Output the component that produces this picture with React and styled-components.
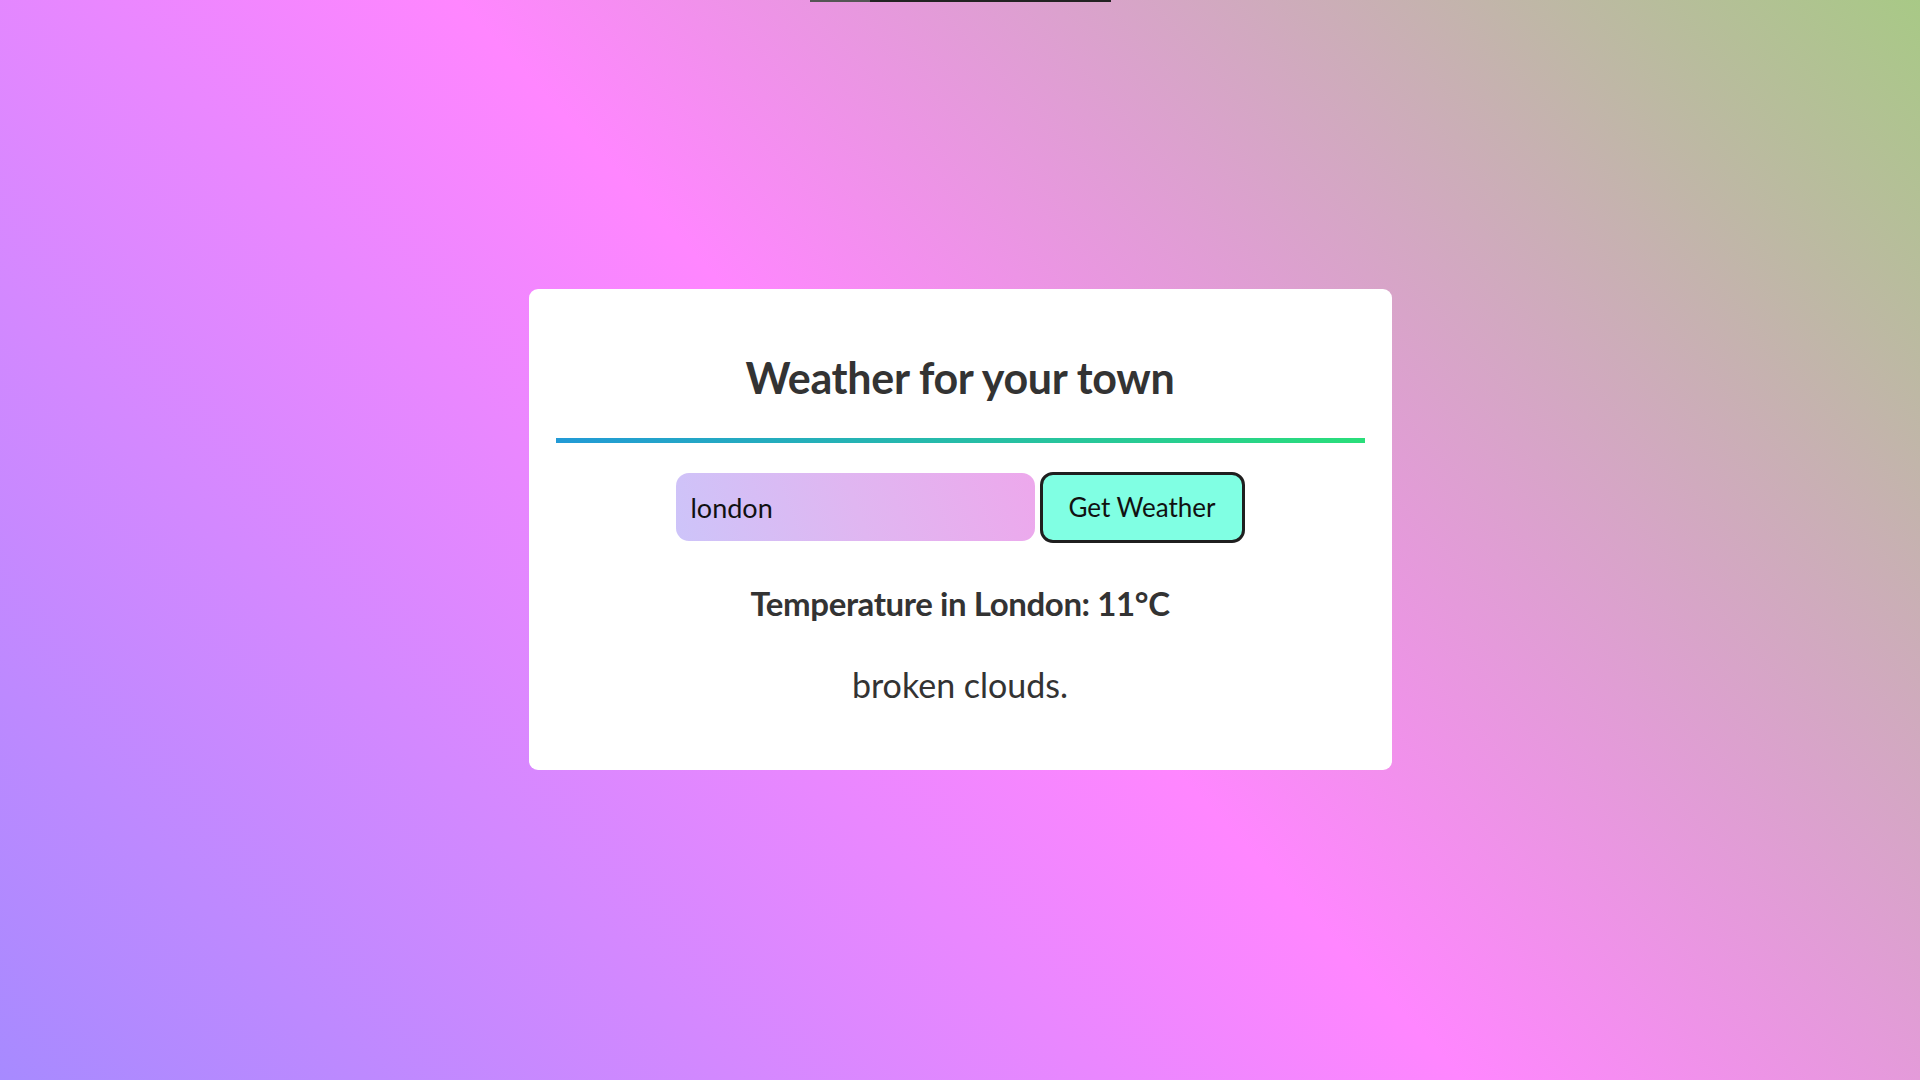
import React from 'react'
import styled, { createGlobalStyle } from 'styled-components'

const GlobalStyle = createGlobalStyle`
  * {
    box-sizing: border-box;
  }

  body {
    margin: 0;
    font-family: 'Lato', 'Noto Sans', sans-serif;
    background: linear-gradient(47deg, #a78aff 0%, #ff86ff 50%, #a8c986 100%);
    min-height: 100vh;
  }
`

const Page = styled.div`
  min-height: 100vh;
  display: flex;
  flex-direction: column;
  align-items: center;
`

const TopEdge = styled.div`
  width: 301px;
  height: 2px;
  background: linear-gradient(to right, #555 0, #555 60px, #222 60px);
`

const Main = styled.main`
  flex: 1;
  width: 100%;
  display: flex;
  align-items: center;
  justify-content: center;
  padding-bottom: 24px;
`

const Card = styled.section`
  width: 863px;
  background: #fff;
  border-radius: 9px;
  padding: 65px 27px 66px;
  display: flex;
  flex-direction: column;
  align-items: center;
  text-align: center;
  color: #333;
`

const Title = styled.h1`
  margin: 0;
  font-size: 43px;
  line-height: 47px;
  font-weight: 700;
  letter-spacing: -0.3px;
`

const Divider = styled.hr`
  width: 100%;
  height: 5px;
  margin: 37px 0 29px;
  border: none;
  background: linear-gradient(to right, #229ad6, #2ade7a);
`

const SearchRow = styled.form`
  display: flex;
  align-items: center;
  gap: 5px;
`

const CityInput = styled.input`
  width: 359px;
  height: 68px;
  border: none;
  border-radius: 13px;
  padding: 0 15px;
  font-family: inherit;
  font-size: 27px;
  color: #111;
  background: linear-gradient(70deg, #cdc4f9 0%, #e0b6f1 50%, #eda8ec 100%);
  outline: none;
`

const SubmitButton = styled.button`
  width: 205px;
  height: 71px;
  border: 3px solid #1f1f1f;
  border-radius: 13px;
  background: #80ffe3;
  font-family: inherit;
  font-size: 26px;
  color: #111;
  cursor: pointer;
`

const Temperature = styled.p`
  margin: 42px 0 0;
  font-size: 33px;
  line-height: 36px;
  font-weight: 700;
  letter-spacing: -0.4px;
`

const Description = styled.p`
  margin: 45px 0 0;
  font-size: 34px;
  line-height: 38px;
  font-weight: 400;
`

export default function App() {
  return (
    <>
      <GlobalStyle />
      <Page>
        <TopEdge />
        <Main>
          <Card>
            <Title>Weather for your town</Title>
            <Divider />
            <SearchRow onSubmit={(e) => e.preventDefault()}>
              <CityInput defaultValue="london" />
              <SubmitButton type="submit">Get Weather</SubmitButton>
            </SearchRow>
            <Temperature>Temperature in London: 11°C</Temperature>
            <Description>broken clouds.</Description>
          </Card>
        </Main>
      </Page>
    </>
  )
}
